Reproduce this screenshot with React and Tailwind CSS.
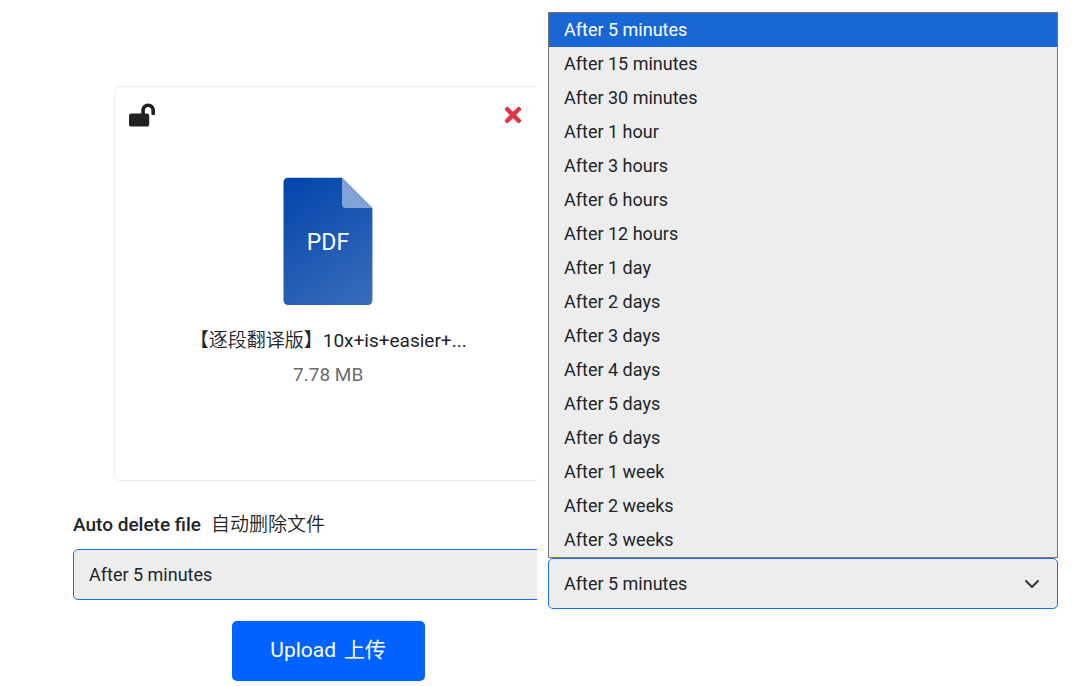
import { useState } from "react";
import { FaLockOpen, FaTimes } from "react-icons/fa";

const OPTIONS = [
  "After 5 minutes",
  "After 15 minutes",
  "After 30 minutes",
  "After 1 hour",
  "After 3 hours",
  "After 6 hours",
  "After 12 hours",
  "After 1 day",
  "After 2 days",
  "After 3 days",
  "After 4 days",
  "After 5 days",
  "After 6 days",
  "After 1 week",
  "After 2 weeks",
  "After 3 weeks",
];

function PdfIcon() {
  return (
    <svg viewBox="0 0 90 128" className="h-32 w-[90px]" role="img" aria-label="PDF file">
      <defs>
        <linearGradient id="page" x1="0" y1="0" x2="90" y2="128" gradientUnits="userSpaceOnUse">
          <stop offset="0" stopColor="#0044ab" />
          <stop offset="1" stopColor="#3a6dbb" />
        </linearGradient>
      </defs>
      <path d="M4.500 .8H59L89.400 31V123.500a4.500 4.500 0 0 1-4.500 4.500H5A4.500 4.500 0 0 1 0.500 123.500V5.300A4.500 4.500 0 0 1 5 .8z" fill="url(#page)" />
      <path d="M59 .5L89.500 31H63a4 4 0 0 1-4-4z" fill="#80a3da" />
      <text x="45" y="73" textAnchor="middle" fill="#fff" fontSize="23" fontFamily="Roboto, sans-serif">PDF</text>
    </svg>
  );
}

function DurationSelect({ id, label, value, onChange }) {
  return (
    <div className="grid items-center">
      <select
        id={id}
        aria-label={label}
        value={value}
        onChange={(e) => onChange(e.target.value)}
        className="col-start-1 row-start-1 h-[51px] w-full appearance-none rounded-[5px] border border-[#1a6dff] bg-[#ededed] px-[15px] text-lg text-[#212529] outline-none"
      >
        {OPTIONS.map((o) => (
          <option key={o}>{o}</option>
        ))}
      </select>
      <svg
        viewBox="0 0 16 16"
        className="pointer-events-none col-start-1 row-start-1 mr-[18px] size-4 justify-self-end"
        fill="none"
        stroke="#343a40"
        strokeWidth="2"
        strokeLinecap="round"
        strokeLinejoin="round"
        aria-hidden="true"
      >
        <path d="M2 5l6 6 6-6" />
      </svg>
    </div>
  );
}

function FileCard() {
  return (
    <article className="mx-[41px] flex h-[395px] flex-col rounded-md border border-[#ededed]">
      <header className="flex items-start justify-between pt-4 pr-4 pl-[14px]">
        <button type="button" aria-label="Set password" className="text-[#212121]">
          <FaLockOpen className="h-6 w-[26px]" />
        </button>
        <button type="button" aria-label="Remove file" className="text-[#dc3545]">
          <FaTimes className="size-6" />
        </button>
      </header>
      <div className="mt-[50px] flex flex-col items-center">
        <PdfIcon />
        <p className="mt-[19px] text-[19px] leading-[34px]">
          【<span className="font-[350]">逐段翻译版</span>】10x+is+easier+...
        </p>
        <p className="text-[19px] leading-[34px] text-[#6c6c6c]">7.78 MB</p>
      </div>
    </article>
  );
}

export default function App() {
  const [value, setValue] = useState(OPTIONS[0]);
  return (
    <main className="grid grid-cols-[537fr_543fr] bg-white font-['Roboto','Noto_Sans_CJK_SC',sans-serif] text-[#212529]">
      <section className="overflow-hidden pt-[86px] pb-1 pl-[73px]">
        <form className="w-[110%]" onSubmit={(e) => e.preventDefault()}>
          <FileCard />
          <label htmlFor="auto-delete" className="mt-[27px] mb-[7px] flex items-center gap-[10px] text-[19px] leading-[34px]">
            <span className="font-medium">Auto delete file</span>
            <span className="font-[350]">自动删除文件</span>
          </label>
          <DurationSelect id="auto-delete" value={value} onChange={setValue} />
          <div className="mt-[21px] flex justify-center">
            <button type="submit" className="flex h-[60px] w-[193px] items-center justify-center gap-2 rounded-[5px] bg-[#0062ff] text-[21px] text-white">
              <span>Upload</span>
              <span>上传</span>
            </button>
          </div>
        </form>
      </section>
      <section className="pt-3 pr-[22px] pl-[11px]">
        <ul role="listbox" aria-label="Auto delete after" className="border border-[#767676] bg-[#ededed] text-lg leading-[34px]">
          {OPTIONS.map((o) => (
            <li
              key={o}
              role="option"
              aria-selected={o === value}
              onClick={() => setValue(o)}
              className="px-[15px] aria-selected:bg-[#1967d2] aria-selected:text-white"
            >
              {o}
            </li>
          ))}
        </ul>
        <DurationSelect id="duration" label="Delete file after" value={value} onChange={setValue} />
      </section>
    </main>
  );
}
